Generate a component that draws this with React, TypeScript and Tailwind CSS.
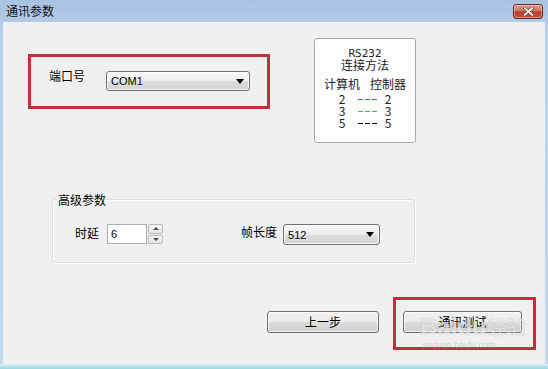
import React from "react";

function Combo({ value, cls }: { value: string; cls: string }) {
  return (
    <div
      className={`flex items-center justify-between rounded-[3px] border border-[#707070] bg-[linear-gradient(180deg,#f7f7f7_0%,#ececec_50%,#dedede_51%,#d4d4d4_100%)] shadow-[inset_0_0_0_1px_rgba(255,255,255,0.8)] pl-[4px] pr-[5px] ${cls}`}
    >
      <span className="font-['Liberation_Sans',sans-serif] text-[11px] leading-[14px] text-black">{value}</span>
      <svg width="8" height="5" viewBox="0 0 8 5">
        <path d="M0 0 H8 L4 5 Z" fill="#000" />
      </svg>
    </div>
  );
}

function Btn({ label, cls }: { label: string; cls: string }) {
  return (
    <div
      className={`flex items-center justify-center rounded-[3px] border border-[#707070] bg-[linear-gradient(180deg,#f2f2f2_0%,#ebebeb_50%,#dddddd_51%,#cfcfcf_100%)] shadow-[inset_0_0_0_1px_rgba(255,255,255,0.7)] ${cls}`}
    >
      <span className="leading-[16px]">{label}</span>
    </div>
  );
}

function Dashes({ color }: { color: string }) {
  return (
    <div className="flex items-start gap-[2px] w-[19px] h-[1px]">
      <span className={`w-[5px] h-[1px] ${color}`} />
      <span className={`w-[5px] h-[1px] ${color}`} />
      <span className={`w-[5px] h-[1px] ${color}`} />
    </div>
  );
}

function PinRow({ n, color }: { n: string; color: string }) {
  return (
    <div className="flex items-start justify-center h-[12px] leading-[12px]">
      <span className="w-[10px] text-center">{n}</span>
      <div className="ml-[11px] mr-[6px] mt-[6px]">
        <Dashes color={color} />
      </div>
      <span className="w-[10px] text-center">{n}</span>
    </div>
  );
}

export default function App() {
  return (
    <div className="relative w-[548px] h-[369px] overflow-hidden flex flex-col bg-[linear-gradient(180deg,#a8c2e1_0%,#b9cfea_10%,#c4d8ee_100%)] font-['Noto_Sans_CJK_SC','Microsoft_YaHei',sans-serif] text-[12px] text-black">
      {/* Title bar */}
      <div className="h-[22px] flex items-start justify-between pl-[6px] pr-[5px]">
        <span className="mt-[3px] leading-[16px] text-[12px] text-[#111]">通讯参数</span>
        <div className="mt-[4px] w-[30px] h-[15px] rounded-[3px] border border-[#6b2a24] bg-[linear-gradient(180deg,#e49d8e_0%,#d2705c_45%,#b8402c_55%,#c4523c_100%)] flex items-center justify-center shadow-[inset_0_0_0_1px_rgba(255,255,255,0.35)]">
          <svg width="11" height="9" viewBox="0 0 11 9">
            <path d="M1.5 1 L9.5 8 M9.5 1 L1.5 8" stroke="#5a2a22" strokeWidth="3" strokeLinecap="round" />
            <path d="M1.5 1 L9.5 8 M9.5 1 L1.5 8" stroke="#ffffff" strokeWidth="1.8" strokeLinecap="round" />
          </svg>
        </div>
      </div>

      {/* Client area */}
      <div className="flex-1 mx-[3px] bg-[#f0f0f0] pt-[16px] flex flex-col">
        {/* Top section */}
        <div className="flex items-start h-[105px]">
          <div className="ml-[25px] mt-[16px] w-[242px] h-[55px] border-[3px] border-[#c0303a] flex items-start pl-[18px]">
            <span className="mt-[11px] leading-[16px]">端口号</span>
            <Combo value="COM1" cls="ml-[21px] mt-[14px] w-[144px] h-[20px]" />
          </div>

          <div className="ml-[44px] w-[102px] h-[105px] rounded-[3px] border border-[#a9a9a9] bg-[#fdfdfd] flex flex-col items-center pt-[9px] text-[#222]">
            <div className="leading-[11px] h-[11px] font-['DejaVu_Sans_Mono',monospace] text-[11px]">RS232</div>
            <div className="leading-[11px] h-[11px]">连接方法</div>
            <div className="mt-[8px] h-[12px] leading-[12px] flex gap-[10px]">
              <span>计算机</span>
              <span>控制器</span>
            </div>
            <div className="mt-[3px] flex flex-col w-full">
              <PinRow n="2" color="bg-[#e03030]" />
              <PinRow n="3" color="bg-[#30c030]" />
              <PinRow n="5" color="bg-[#000000]" />
            </div>
          </div>
        </div>

        {/* Group box */}
        <fieldset className="mt-[50px] ml-[49px] w-[363px] rounded-[3px] border border-[#d5dfe5] shadow-[inset_1px_1px_0_#ffffff,1px_1px_0_#ffffff] pl-[4px] pb-[17px]">
          <legend className="px-[1px] leading-[13px]">高级参数</legend>
          <div className="pl-[18px] mt-[18px] flex items-start h-[21px]">
            <span className="leading-[16px] mt-[1px]">时延</span>
            <div className="ml-[8px] w-[40px] h-[20px] border border-[#abadb3] bg-white flex items-center pl-[3px]">
              <span className="font-['Liberation_Sans',sans-serif] text-[11px] leading-[14px]">6</span>
            </div>
            <div className="ml-[1px] w-[15px] h-[20px] flex flex-col gap-[1px]">
              <div className="flex-1 rounded-[2px] border border-[#b9b9b9] bg-[linear-gradient(180deg,#f7f7f7,#e3e3e3)] flex items-center justify-center">
                <svg width="6" height="3" viewBox="0 0 6 3">
                  <path d="M0 3 L3 0 L6 3 Z" fill="#4d4d4d" />
                </svg>
              </div>
              <div className="flex-1 rounded-[2px] border border-[#b9b9b9] bg-[linear-gradient(180deg,#f7f7f7,#e3e3e3)] flex items-center justify-center">
                <svg width="6" height="3" viewBox="0 0 6 3">
                  <path d="M0 0 L6 0 L3 3 Z" fill="#4d4d4d" />
                </svg>
              </div>
            </div>
            <span className="ml-[78px] leading-[16px]">帧长度</span>
            <Combo value="512" cls="ml-[6px] w-[97px] h-[21px]" />
          </div>
        </fieldset>

        {/* Buttons */}
        <div className="mt-[34px] flex items-start">
          <Btn label="上一步" cls="ml-[264px] mt-[14px] w-[112px] h-[22px]" />
          <div className="ml-[14px] w-[143px] h-[53px] border-[3px] border-[#c0303a] pt-[11px] pl-[7px]">
            <Btn label="通讯测试" cls="w-[119px] h-[22px]" />
          </div>
        </div>
      </div>

      {/* Bottom frame */}
      <div className="h-[5px] bg-[linear-gradient(180deg,#e2f3f8_0%,#b9e4ea_40%,#9ad6df_100%)]" />

      {/* Watermark */}
      <div className="absolute left-[420px] top-[314px] flex flex-col items-start pointer-events-none">
        <span className="font-['Liberation_Sans',sans-serif] font-bold text-[24px] leading-[26px] text-[rgba(255,255,255,0.6)] [text-shadow:0_0_1px_rgba(130,130,130,0.45)]">
          Baidu<span className="font-['Noto_Sans_CJK_SC',sans-serif] font-normal text-[20px]">经验</span>
        </span>
        <span className="ml-[3px] font-['Liberation_Sans',sans-serif] text-[9px] leading-[10px] text-[rgba(160,160,160,0.45)]">jingyan.baidu.com</span>
      </div>
    </div>
  );
}
